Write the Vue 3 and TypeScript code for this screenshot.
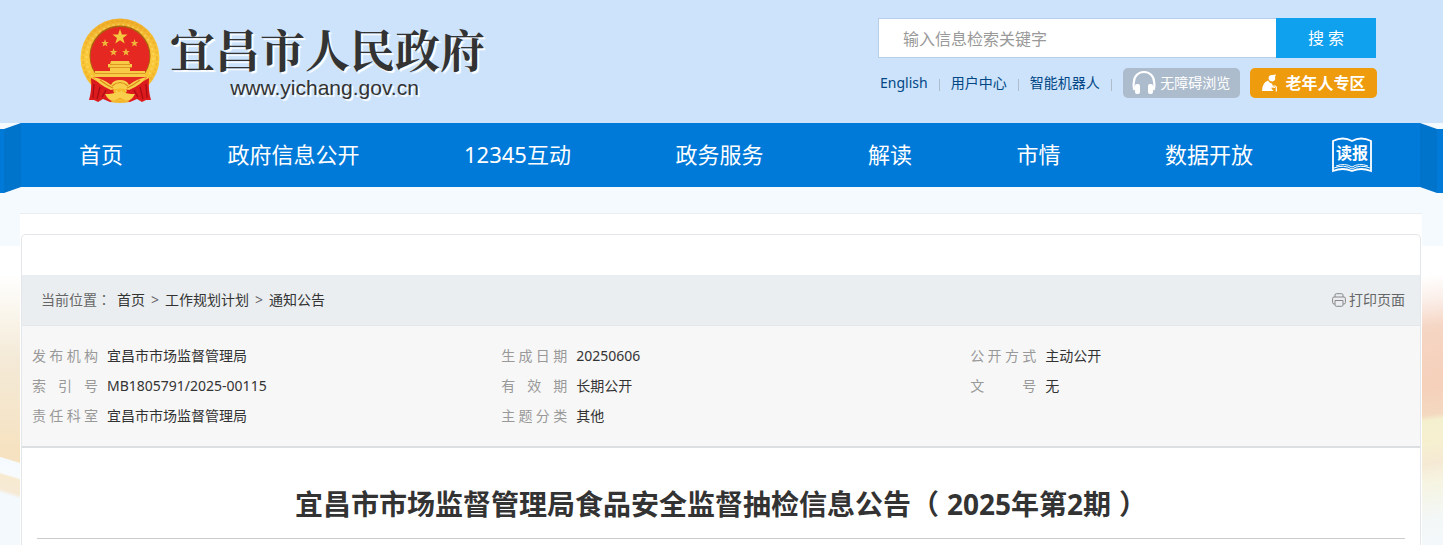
<script setup lang="ts">
import { ref } from 'vue'

const keyword = ref('')

const navItems: string[] = ['首页', '政府信息公开', '12345互动', '政务服务', '解读', '市情', '数据开放']
const topLinks: string[] = ['English', '用户中心', '智能机器人']
const crumbs: string[] = ['首页', '工作规划计划', '通知公告']

interface Meta {
  label: string
  value: string
}
const metas: Meta[] = [
  { label: '发布机构', value: '宜昌市市场监督管理局' },
  { label: '生成日期', value: '20250606' },
  { label: '公开方式', value: '主动公开' },
  { label: '索引号', value: 'MB1805791/2025-00115' },
  { label: '有效期', value: '长期公开' },
  { label: '文号', value: '无' },
  { label: '责任科室', value: '宜昌市市场监督管理局' },
  { label: '主题分类', value: '其他' },
]

function printPage() {
  window.print()
}
</script>

<template>
  <div class="page">
    <header class="header">
      <a class="brand" href="#">
        <svg class="emblem" viewBox="0 0 80 86" aria-hidden="true">
          <defs>
            <linearGradient id="gold" x1="0" y1="0" x2="0" y2="1">
              <stop offset="0" stop-color="#efae2b" />
              <stop offset=".5" stop-color="#fbcb3c" />
              <stop offset="1" stop-color="#f4b526" />
            </linearGradient>
          </defs>
          <circle cx="40" cy="40" r="39.5" fill="url(#gold)" />
          <circle cx="40" cy="40" r="37" fill="none" stroke="#df951b" stroke-width="2" stroke-dasharray="3 2" opacity=".3" />
          <circle cx="40" cy="40" r="33.5" fill="none" stroke="#fde27a" stroke-width="2" stroke-dasharray="2 3" opacity=".5" />
          <circle cx="40" cy="38" r="30.5" fill="#a8660f" />
          <circle cx="40" cy="38.500" r="29.500" fill="#e62822" />
          <path d="M40 11 L41.900 16.500 H47.600 L43 20 L44.700 25.600 L40 22.200 L35.300 25.600 L37 20 L32.400 16.500 H38.100 Z" fill="#f5c840" />
          <g fill="#f0b63a">
            <path id="small-star" d="M25 21 L26 24 H28.800 L26.600 25.800 L27.400 28.500 L25 26.900 L22.600 28.500 L23.400 25.800 L21.200 24 H24 Z" />
            <use href="#small-star" x="29.500" />
            <use href="#small-star" x="8.500" y="9" />
            <use href="#small-star" x="21" y="9" />
          </g>
          <path d="M31 43 H49 L50 46 H52 V49 H50 V53 H65 V59 H15 V53 H30 V49 H28 V46 H30 Z" fill="#f8ca45" />
          <path d="M30 46.500 H50 M28 49.500 H52 M15 55.500 H65" stroke="#d58a1b" stroke-width=".8" />
          <path d="M13 59 H67 L61 66 L50 65 Q40 59 30 65 L20 66 Z" fill="#e62822" />
          <path d="M11 60 Q21 66 34 70 Q31 76 40 77 Q49 76 46 70 Q59 66 69 60 Q68 72 71 82 L66 82 L62 84 L57 81 L50 84 H30 L23 81 L18 84 L14 82 L9 82 Q12 72 11 60 Z" fill="#dc1b1d" />
          <path d="M14 66 L13 80 M20 69 L17 81 M26 72 L22 79 M66 66 L67 80 M60 69 L63 81 M54 72 L58 79" stroke="#a80b14" stroke-width="1.200" />
          <path d="M13 59 Q24 61 31 67 Q33 62 40 62 Q47 62 49 67 Q56 61 67 59 Q61 67 49 72 Q40 69 31 72 Q19 67 13 59 Z" fill="#f8ce4a" />
          <path d="M32 68 Q40 61 48 68 M20 62 Q28 68 33 70 M60 62 Q52 68 47 70" stroke="#dc8b1c" fill="none" stroke-width="1.200" />
          <path d="M25 76 Q33 76 37 74 H43 Q47 76 55 76 Q51 84 45 83 L40 80 L35 83 Q29 84 25 76 Z" fill="#f8ce4a" />
          <path d="M30 84 L40 80 L50 84 Q40 86 30 84 Z" fill="#f3b82c" />
        </svg>
        <span class="brand-text">
          <span class="brand-name">宜昌市人民政府</span>
          <span class="brand-url">www.yichang.gov.cn</span>
        </span>
      </a>

      <div class="tools">
        <form class="search" @submit.prevent>
          <input v-model="keyword" type="text" aria-label="输入信息检索关键字" placeholder="输入信息检索关键字" />
          <button type="submit">搜 索</button>
        </form>
        <div class="links">
          <template v-for="link in topLinks" :key="link">
            <a href="#">{{ link }}</a>
            <i class="sep"></i>
          </template>
          <button class="pill access" type="button">
            <svg width="24" height="24" viewBox="0 0 24 24" aria-hidden="true">
              <path d="M2.500 19 Q1 15 2 10.500 A10 9.500 0 0 1 22 10.500 Q23 15 21.500 19" fill="none" stroke="#fff" stroke-width="2.200" />
              <rect x="3" y="13" width="5" height="10" rx="2" fill="#fff" />
              <rect x="16" y="13" width="5" height="10" rx="2" fill="#fff" />
            </svg>
            无障碍浏览
          </button>
          <button class="pill elder" type="button">
            <svg width="18" height="18" viewBox="0 0 18 18" aria-hidden="true">
              <path d="M7.500 4 Q8 .5 11.500 1 L15 .5 L14 3 Q15 7 11.500 7.500 Q8 7.500 7.500 4 Z" fill="#fff" />
              <path d="M7 6.500 Q8.500 9 11 9.500 L12 12.500 L14 13 V14 L10.500 13.500 V14.500 L12.500 17 H1 Q1 9 7 6.500 Z" fill="#fff" />
              <path d="M12 12 H14 Q15.300 12 15.300 13.500 V17.500" fill="none" stroke="#fff" stroke-width="1.200" />
            </svg>
            老年人专区
          </button>
        </div>
      </div>
    </header>

    <nav class="nav">
      <svg class="fold" viewBox="0 0 21 70" width="21" height="70" aria-hidden="true">
        <path d="M0 6 H4 L4 70 H0 Z" fill="#007ad9" />
        <path d="M4 6 L21 0 V64 L4 70 Z" fill="#0073cb" />
      </svg>
      <div class="nav-bar">
        <ul>
          <li v-for="item in navItems" :key="item"><a href="#">{{ item }}</a></li>
        </ul>
        <a class="paper" href="#">
          <svg width="40" height="36" viewBox="0 0 40 36" fill="none" stroke="#fff" aria-hidden="true">
            <path d="M1 34 V4 Q11 -1 20 4 Q29 -1 39 4 V34 Q29 30 20 34 Q11 30 1 34 Z" stroke-width="1.800" />
            <path d="M2 31 Q12 27 20 32 Q28 27 38 31 M4 29 Q13 25.500 20 30 Q27 25.500 36 29" stroke-width="1" />
          </svg>
          <span>读报</span>
        </a>
      </div>
      <svg class="fold" viewBox="0 0 23 70" width="23" height="70" aria-hidden="true">
        <path d="M17 6 H23 V70 H17 Z" fill="#007ad9" />
        <path d="M0 0 L17 6 V70 L0 64 Z" fill="#0073cb" />
      </svg>
    </nav>

    <div class="body">
      <div class="side side-left"></div>
      <main class="main">
        <article class="box">
          <div class="crumbs">
            <div class="trail">
              <span>当前位置<span class="colon">：</span></span>
              <template v-for="(crumb, i) in crumbs" :key="crumb">
                <span v-if="i > 0">&gt;</span>
                <a href="#">{{ crumb }}</a>
              </template>
            </div>
            <button class="print" type="button" @click="printPage">
              <svg width="14" height="14" viewBox="0 0 14 14" fill="none" stroke="#888" aria-hidden="true">
                <path d="M3 4 V2 Q3 .7 4.500 .7 H9.500 Q11 .7 11 2 V4" />
                <path d="M3 11 H2 Q.6 11 .6 9.500 V5.500 Q.6 4 2 4 H12 Q13.400 4 13.400 5.500 V9.500 Q13.400 11 12 11 H11" />
                <path d="M3 7.500 H11 V12 Q11 13.300 9.500 13.300 H4.500 Q3 13.300 3 12 Z" />
              </svg>
              打印页面
            </button>
          </div>

          <dl class="metas">
            <div v-for="meta in metas" :key="meta.label" class="meta">
              <dt>{{ meta.label }}</dt>
              <dd>{{ meta.value }}</dd>
            </div>
          </dl>

          <h1>宜昌市市场监督管理局食品安全监督抽检信息公告（<span class="issue">2025年第2期</span>）</h1>
        </article>
      </main>
      <div class="side side-right"></div>
    </div>
  </div>
</template>

<style>
body {
  margin: 0;
}
</style>

<style scoped>
.page {
  display: flex;
  flex-direction: column;
  min-height: 100vh;
  background: #f5faff;
  color: #333;
  font: 14px/20px "Noto Sans", "Noto Sans CJK SC", sans-serif;
}
a {
  color: inherit;
  text-decoration: none;
}
button {
  border: 0;
  padding: 0;
  background: none;
  color: inherit;
  font: inherit;
  cursor: pointer;
}

.header {
  display: flex;
  justify-content: space-between;
  align-items: flex-start;
  box-sizing: border-box;
  height: 123px;
  padding: 18px 67px 0 80px;
  background: #cce3fb;
}
.brand {
  display: flex;
  gap: 10px;
}
.emblem {
  width: 80px;
  height: 86px;
}
.brand-text {
  display: flex;
  flex-direction: column;
  align-items: center;
  padding-top: 4px;
  text-shadow: 2px 2px 1px #fff;
}
.brand-name {
  font: 700 45px/54px "Noto Serif CJK SC", "Noto Sans CJK SC", serif;
}
.brand-url {
  padding-right: 6px;
  font: 21px/24px "Liberation Sans", sans-serif;
}
.tools {
  width: 498px;
}
.search {
  display: flex;
  height: 40px;
}
.search input {
  flex: 1;
  min-width: 0;
  box-sizing: border-box;
  border: 1px solid #b8cfe9;
  border-right: 0;
  padding: 2px 24px 0;
  background: #fff;
  font: 16px/24px "Noto Sans", "Noto Sans CJK SC", sans-serif;
  outline: 0;
}
.search input::placeholder {
  color: #999;
  opacity: 1;
}
.search button {
  width: 100px;
  background: #0fa0ee;
  color: #fff;
  font-size: 16px;
}
.links {
  display: flex;
  align-items: center;
  height: 30px;
  margin: 10px -1px 0 2px;
  color: #014785;
  white-space: nowrap;
}
.sep {
  width: 1px;
  height: 12px;
  margin: 3px 11px 0;
  background: #aebccb;
}
.pill {
  display: flex;
  align-items: center;
  justify-content: center;
  height: 30px;
  border-radius: 5px;
  color: #fff;
}
.access {
  gap: 4px;
  width: 117px;
  background: #adbccc;
}
.elder {
  gap: 6px;
  width: 127px;
  margin-left: auto;
  background: #ee9b0d;
  font-size: 16px;
  font-weight: 700;
}

.nav {
  display: flex;
  height: 64px;
}
.fold {
  flex: none;
}
.nav-bar {
  flex: 1;
  display: flex;
  align-items: center;
  padding: 0 48px 0 58px;
  background: #007ad9;
  color: #fff;
}
.nav-bar ul {
  flex: 1;
  display: flex;
  justify-content: space-between;
  margin: 0 79px 0 0;
  padding: 0 0 2px;
  list-style: none;
  font-size: 22px;
  line-height: 62px;
  white-space: nowrap;
}
.paper {
  display: grid;
  place-items: center;
}
.paper svg,
.paper span {
  grid-area: 1 / 1;
}
.paper span {
  padding-bottom: 4px;
  font-size: 16px;
  font-weight: 700;
}

.body {
  flex: 1;
  display: flex;
  padding-top: 26px;
}
.side {
  flex: none;
  margin-top: 33px;
}
.side-left {
  width: 20px;
  background:
    linear-gradient(197deg, transparent 207px, #f5faff 208px, #f7fbfd 222px, #f7ead1 224px, #f6ead5 238px, #f4f9fe 242px),
    linear-gradient(#fff 28px, #faf5eb 70px, #f4ead8 110px, #f5e5ca 170px, #f6e2c0 205px);
}
.side-right {
  width: 21px;
  background: linear-gradient(172deg, #fff 30px, #fbeee8 55px, #f5d5c3 82px, #f5d0ba 140px, #f4d8c0 168px, #f4f0ce 174px, #f6efd0 198px, #f5e9d4 216px, #f6f4e1 234px, #f3f7f6 270px, #f3f8fb 300px);
}
.main {
  flex: 1;
  display: flex;
  border-top: 1px solid #ebeef0;
  padding: 20px 1px 0;
  background: #fff;
}
.box {
  flex: 1;
  border: 1px solid #e4e7ea;
  border-bottom: 0;
  border-radius: 5px 5px 0 0;
  padding-top: 40px;
}
.crumbs {
  display: flex;
  justify-content: space-between;
  align-items: center;
  height: 50px;
  padding: 0 15px 0 19px;
  border-bottom: 1px solid #e4e7e9;
  background: #eaeef1;
  color: #666;
}
.trail {
  display: flex;
  align-items: baseline;
  gap: 6px;
}
.trail a {
  color: #333;
}
.colon {
  font-family: "Noto Sans CJK TC", sans-serif;
  line-height: 1;
}
.print {
  display: flex;
  align-items: center;
  gap: 3px;
}
.metas {
  display: grid;
  grid-template-columns: 33.8% 33.8% 1fr;
  margin: 0;
  padding: 15px 0 15px 10px;
  border-bottom: 2px solid #dcdfe2;
  background: #f7f7f7;
  line-height: 30px;
}
.meta {
  display: flex;
  gap: 9px;
}
.meta dt {
  width: 66px;
  color: #999;
  white-space: nowrap;
  text-align-last: justify;
}
.meta dd {
  margin: 0;
}
h1 {
  margin: 35px 15px 0;
  padding-bottom: 13px;
  border-bottom: 1px solid #ccc;
  font-size: 28px;
  line-height: 42px;
  text-align: center;
}
.issue {
  margin: 0 8px;
}
</style>
